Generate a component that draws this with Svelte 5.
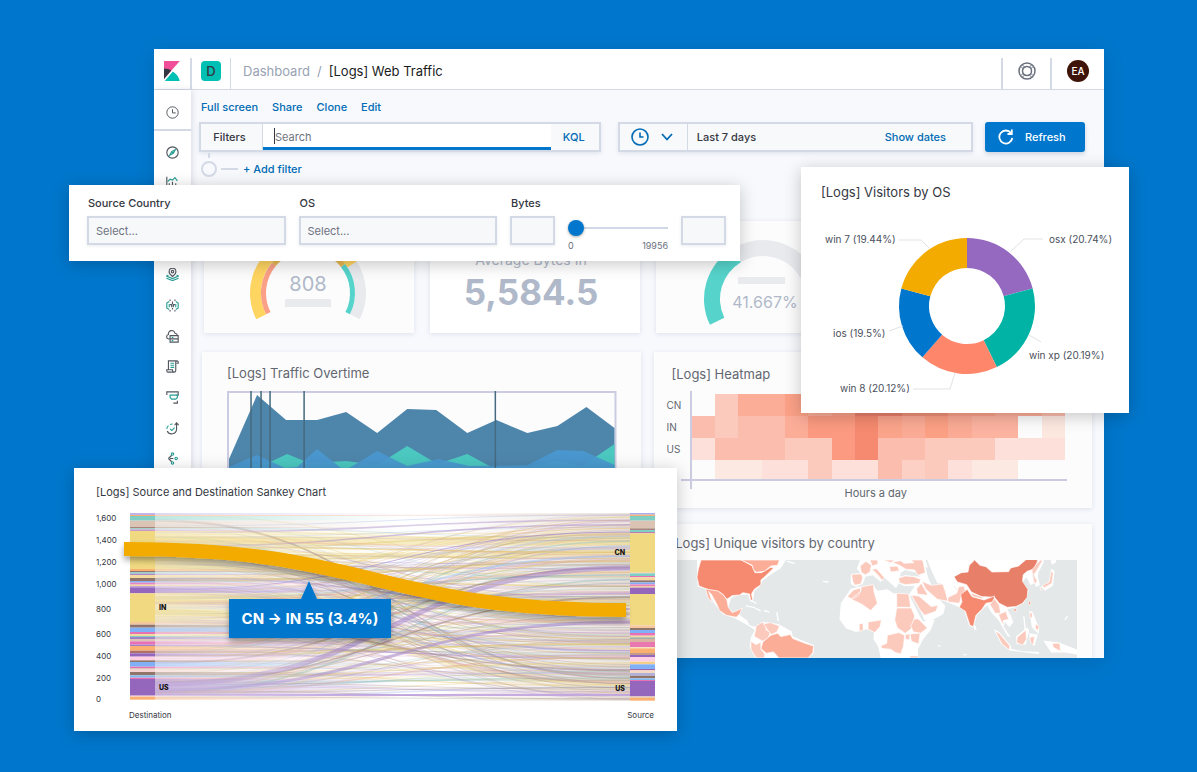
<script lang="ts">
  type Band = [number, string];

  const gray = '#525760';
  const teal = '#2a9d94';

  // 16x16 line icons, each a list of [path, stroke]
  const navItems: { name: string; paths: [string, string][] }[] = [
    { name: 'Discover', paths: [['M8 1a7 7 0 1 0 0 14a7 7 0 0 0 0-14z', gray], ['M11.5 4.5L9 9L4.5 11.5L7 7zM7 7l2 2', teal]] },
    { name: 'Visualize', paths: [['M1 1v14h14M4 12V9M8 12V7M12 12V9', gray], ['M2 7l3-3l3 1l3-3l3 4', teal]] },
    { name: 'Dashboard', paths: [['M1 2h14v12H1z', gray], ['M1 6h14', teal]] },
    { name: 'Canvas', paths: [['M2 2h9v9H2z', gray], ['M6 6h8v8H6z', teal]] },
    { name: 'Maps', paths: [['M8 10.500C5 8 3.800 6.500 3.800 4.500a4.200 4.200 0 0 1 8.400 0C12.200 6.500 11 8 8 10.500zM8 3a1.500 1.500 0 1 0 0 3a1.500 1.500 0 0 0 0-3z', gray], ['M3 8.500L.5 10l7.500 3l7.500-3L13 8.500M.5 12.500l7.500 3l7.500-3', teal]] },
    { name: 'Machine Learning', paths: [['M5 .500v2M8 3v3M11 .500v2M5 13.500v2M8 11v2M11 13.500v2M5 7h2v3M11 7H9v3', gray], ['M4 3L1 5v6l3 2M12 3l3 2v6l-3 2M4 6v4M12 6v4', teal]] },
    { name: 'Infrastructure', paths: [['M4 11H3a2.800 2.800 0 0 1 0-5.500a4 4 0 0 1 8-1.500a3 3 0 0 1 3 2.500M5 7h10v8H5zM5 11h10', gray], ['M7 9h2M7 13h2', teal]] },
    { name: 'Logs', paths: [['M13 4h2V2.500a1.500 1.500 0 0 0-3 0V13a2 2 0 0 1-4 0v-1H1v1.500A1.500 1.500 0 0 0 2.500 15H10M3 12V1h10', gray], ['M5.500 4h4.500M5.500 6.500h4.500M5.500 9h4.500', teal]] },
    { name: 'APM', paths: [['M1 5V1h14v4h-2M9 15h5v-3', gray], ['M5 5h9v3l-2 2H7L5 8z', teal]] },
    { name: 'Uptime', paths: [['M1.500 11a6 6 0 0 0 11.500-2V2M10.500 4L13 1l2.500 3', gray], ['M5 8.500l2.200 2L10.500 7M1 8.500a6 6 0 0 1 2-4M5 3.200a6 6 0 0 1 3-.7', teal]] },
    { name: 'Graph', paths: [['M5 8h4M3 8l4-4M3 8l4 4', gray], ['M8 1a1.500 1.500 0 1 0 0 3a1.500 1.500 0 0 0 0-3zM8 12a1.500 1.500 0 1 0 0 3a1.500 1.500 0 0 0 0-3zM12.500 6.500a1.500 1.500 0 1 0 0 3a1.500 1.500 0 0 0 0-3z', teal]] }
  ];

  const menu = ['Full screen', 'Share', 'Clone', 'Edit'];

  function polar(cx: number, cy: number, r: number, deg: number) {
    const a = ((deg - 90) * Math.PI) / 180;
    return `${(cx + r * Math.cos(a)).toFixed(2)} ${(cy + r * Math.sin(a)).toFixed(2)}`;
  }

  // ring segment, angles clockwise from twelve o'clock
  function ring(cx: number, cy: number, r1: number, r0: number, a: number, b: number) {
    const big = b - a > 180 ? 1 : 0;
    return `M${polar(cx, cy, r1, a)}A${r1} ${r1} 0 ${big} 1 ${polar(cx, cy, r1, b)}L${polar(cx, cy, r0, b)}A${r0} ${r0} 0 ${big} 0 ${polar(cx, cy, r0, a)}Z`;
  }

  const donut = [
    { from: 0, to: 75, color: '#9569c0' },
    { from: 75, to: 154, color: '#00b3a4' },
    { from: 154, to: 221, color: '#fe876b' },
    { from: 221, to: 285, color: '#0077cc' },
    { from: 285, to: 360, color: '#f3ab00' }
  ];

  const donutLabels = [
    { text: 'win 7 (19.44%)', x: 24, y: 36, line: '98,33 120,33 128,41' },
    { text: 'osx (20.74%)', x: 248, y: 36, line: '242,32 223,32 209,45' },
    { text: 'ios (19.5%)', x: 32, y: 130, line: '88,124 102,119' },
    { text: 'win xp (20.19%)', x: 228, y: 152, line: '228,128 240,135' },
    { text: 'win 8 (20.12%)', x: 39, y: 185, line: '112,182 149,182 154,166' }
  ];

  const heat = [
    ['', '#fccabd', '#fcad98', '#fcad98', '#fba188', '#fcad98', '#fba188', '#e87f68', '#e87f68', '#f09078', '#f09078', '#fba188', '#fba188', '#fcad98', '#fcad98', '#fcbdad'],
    ['#fbbdad', '#fccabd', '#fbbdad', '#fbbdad', '#fcad98', '#fb9a80', '#fb9a80', '#f58a70', '#fba48c', '#fbab95', '#fca084', '#fbab95', '#fcb3a0', '#fcb3a0', '', '#fde8e0'],
    ['#fde0da', '#fbbdad', '#fbbdad', '#fbbdad', '#fccabd', '#fccabd', '#fb9a80', '#f58a70', '#fbbdad', '#fbbdad', '#fccabd', '#fccabd', '#fccabd', '#fde0da', '#fde0da', '#fde0da'],
    ['', '#fceae2', '#fceae2', '#fde0da', '#fde0da', '#fccabd', '#fde0da', '#fde0da', '#fbbdad', '#fdd0c5', '#fccabd', '#fde0da', '#fceae2', '#fceae2', '', '']
  ];

  const land = [
    'M78 120H345L330 145L305 160L275 182L268 198L250 214L246 246L236 240L232 224L205 226L180 236L172 262L186 278L214 264L206 284L214 292L228 300L236 316L258 322L275 306L322 312L362 334L366 350L430 376L428 400L412 414H254L236 382L240 352L252 330L226 314L190 294L158 284L136 258L118 232L102 206L80 200Z',
    'M568 120H765L772 145L782 160L790 195L800 200L812 190L830 190L842 228L870 226L850 196L846 180L862 165L905 150L912 120H1120L1108 150L1085 165L1090 190L1080 196L1068 172L1055 186L1074 214L1060 250L1036 262L1010 268L1022 290L1028 308L1016 322L1004 306L998 318L1020 352L1010 348L985 302L962 278L950 256L934 270L918 288L912 310L906 322L896 318L880 270L866 262L828 246L806 238L824 258L818 282L775 306L758 298L722 232L716 222L732 198L700 198L684 190L676 205L660 190L640 172L630 186L606 166L584 170L576 192L556 200L540 192L540 162L570 160L558 146Z',
    'M770 120H915L905 160L862 165L850 200L872 226L842 230L825 192L800 190L786 160L778 142Z',
    'M510 250L540 206L566 200L606 194L620 212L650 208L668 220L716 222L738 262L756 304L792 300L780 330L756 360L742 388V414H630L622 380L608 358L610 336L586 328L556 336L526 326L506 298Z',
    'M908 312l8 8l2 12l-8-4zM970 328l16 8l36 44l-2 14l-28-22zM1036 350l34-28l6 10l-10 42l-28-2zM1016 386l40 8l50 2l-2 6l-88-10zM1076 340l26 4l-10 34l-14-16zM1118 362l48 6l56 22v14l-40-6l-40 0zM1076 272l10 4l20 50l-2 16l-20-20zM1084 150l16-24l14-8l6 8l-16 28l-2 16l6 24l-12 8zM1112 200l24-14l6-40l10 6l-4 44l-24 16zM1140 122l14-4l4 8l-14 8zM570 120l14 4l-4 10l-12-4z'
  ];

  const countries: [string, string][] = [
    ['#f58a70', 'M90 120H212L244 138L252 158L272 158L300 142L308 144L284 168L270 180L270 194L250 208L242 222L245 242L239 240L236 222L216 218L206 225L184 227L168 238L155 222L142 214L116 210L102 205L84 198L78 172L82 148Z'],
    ['#fcad98', 'M210 120H326L320 136L300 138L280 154L256 157L248 150L244 136Z'],
    ['#fcad98', 'M104 207L140 213L156 224L168 240L172 262L184 278L200 272L214 264L206 282L196 292L166 286L146 272L136 250L122 224L113 214L124 248L112 234Z'],
    ['#fccabd', 'M256 318L274 307L284 314L286 330L298 338L292 354L276 364L250 350Z'],
    ['#fccabd', 'M278 312L298 308L326 318L318 336L302 344L290 330Z'],
    ['#fcad98', 'M276 366L300 346L320 340L330 350L358 344L366 356L402 370L428 378L426 398L412 414H324L308 396L286 400L270 386Z'],
    ['#fccabd', 'M240 364L256 374L270 366L270 388L282 402L280 414H256L240 388Z'],
    ['#fccabd', 'M542 163L572 162L576 174L570 192L552 196L546 184Z'],
    ['#fccabd', 'M568 138L586 124L602 136L598 156L584 164L572 158Z'],
    ['#fccabd', 'M598 120H620L622 132L604 138Z'],
    ['#fccabd', 'M638 120H672L660 128ZM656 140L680 138L686 152L660 156ZM664 126L690 122L700 130L730 128L720 120H756L764 158L742 166L732 150L706 148L690 138Z'],
    ['#fccabd', 'M603 148L618 146L640 172L636 182L616 160Z'],
    ['#fccabd', 'M684 174L704 168L730 170L750 178L746 190L704 194L686 188Z'],
    ['#fccabd', 'M530 230L548 210L568 204L570 210L564 226L544 238ZM540 237L570 214L572 200L608 194L610 216L620 250L600 272L572 252Z'],
    ['#fccabd', 'M678 220L714 222L720 262H678Z'],
    ['#fccabd', 'M678 264H722L732 288L722 326L704 340L680 324L672 300Z'],
    ['#fccabd', 'M720 318L732 296L744 298L770 324L750 340L728 336Z'],
    ['#fccabd', 'M718 342L748 340L744 372L722 364ZM704 344L718 342L716 360L704 358Z'],
    ['#fccabd', 'M592 306L632 300L628 320L612 338L592 328ZM565 312L577 310V332L566 334Z'],
    ['#fccabd', 'M650 346L684 338L702 346L698 380L690 402L674 398L660 388L634 386L630 378L648 370ZM718 408H742V414H718Z'],
    ['#fccabd', 'M722 226L744 228L782 260L802 256L796 274L762 286L748 270Z'],
    ['#fccabd', 'M738 206L752 190L772 226L740 222Z'],
    ['#fccabd', 'M754 184L782 196L816 192L824 214L832 244L800 238L782 222L764 206Z'],
    ['#fccabd', 'M832 232L858 220L864 200L880 198L884 214L872 232L866 250L832 246Z'],
    ['#e87f68', 'M850 170L872 158L892 156L896 136L912 120L928 136L946 140L964 156L1014 155L1020 144L1044 138L1072 114L1102 120L1092 146L1070 154L1058 164L1056 184L1072 208L1070 232L1056 250L1036 260L1010 262L986 250L972 232L932 230L902 216L888 194L860 186Z'],
    ['#f58a70', 'M870 224L890 208L904 230L940 240L972 228L968 246L946 250L934 268L916 286L908 320L898 316L884 274L866 262L874 246Z'],
    ['#fccabd', 'M900 218L932 230L940 238L906 230ZM958 254L972 236L986 256L990 280L974 280ZM984 284L1006 274L1014 298L998 302L1000 318L990 300Z'],
    ['#fccabd', 'M974 334L986 340L1018 378L1016 390L994 372ZM1040 352L1066 330L1068 358L1056 376L1038 368ZM1078 352L1092 350L1088 376L1080 366ZM1146 370L1168 370L1170 394L1148 382Z'],
    ['#fccabd', 'M1078 276L1086 282L1084 296L1078 290ZM1096 312L1106 320L1102 332L1094 324ZM1084 150L1100 130L1110 120L1116 122L1098 152L1090 164L1100 184L1092 192ZM1116 196L1136 186L1142 152L1148 160L1144 190L1120 204ZM1108 200L1116 206L1112 212Z'],
    ['#f58a70', 'M1075 244L1080 244L1079 256L1074 252ZM1030 268L1038 266L1036 274L1030 274Z']
  ];

  const left: Band[] = [
    [6, '#c0b5ea'], [3, '#fbb071'], [14, '#80cfc4'], [19, '#dcc4b4'], [4, '#a8857c'], [3, '#80cfc4'], [5, '#c99ac8'],
    [114, '#f0d981'], [6, '#f9b072'], [4, '#92756a'], [4, '#80cfc4'], [4, '#b08ac8'], [9, '#f3d9a0'], [9, '#92756a'], [5, '#85acf0'], [6, '#e686c0'], [4, '#f3d9a0'], [4, '#c0a0d8'], [18, '#9467bd'],
    [86, '#f0d981'], [8, '#f5c79f'], [9, '#92756a'], [13, '#80b1f7'], [6, '#e671b4'], [6, '#f3d9a0'], [3, '#80cfc4'], [6, '#a080c8'], [7, '#dcc4b4'], [10, '#e671b4'], [4, '#a080c8'], [14, '#fbb071'], [8, '#b0706a'], [10, '#9467bd'], [11, '#ffcfe3'], [5, '#92756a'], [14, '#80b1f7'], [4, '#e671b4'], [5, '#dcc4b4'], [7, '#f6d2d2'], [10, '#92756a'], [7, '#85bcf0'], [4, '#e671b4'], [50, '#9467bd'], [3, '#f6d2d2'], [9, '#fbb071']
  ];

  const right: Band[] = [
    [5, '#a5aef0'], [4, '#fbb071'], [14, '#80cfc4'], [23, '#dcc4b4'], [5, '#a8857c'], [6, '#80cfc4'], [4, '#c07ab0'],
    [117, '#f0d981'], [3, '#f5c79f'], [8, '#80cfc4'], [4, '#e671b4'], [9, '#f3d9a0'], [6, '#92756a'], [6, '#85acf0'], [5, '#e686c0'], [5, '#f3c9a0'], [19, '#9467bd'],
    [94, '#f0d981'], [8, '#f5c79f'], [6, '#92756a'], [9, '#80b1f7'], [8, '#e671b4'], [5, '#f3d9a0'], [5, '#a0b0a8'], [9, '#dcb4a4'], [15, '#ea78b0'], [4, '#f3e0c0'], [14, '#fbb071'], [6, '#c09a8a'], [6, '#9467bd'], [14, '#ffcfe3'], [8, '#f3d08a'], [14, '#80b1f7'], [4, '#a060b0'], [8, '#f3d9c0'], [8, '#b0b0e0'], [8, '#92756a'], [5, '#85bcf0'], [3, '#e671b4'], [46, '#9467bd'], [4, '#dcc4b4'], [9, '#fbb071']
  ];

  function stack(bands: Band[]) {
    let y = 513;
    return bands.map(([h, color]) => {
      const bar = { y, h: h / 3, color };
      y += h / 3;
      return bar;
    });
  }

  const leftBars = stack(left);
  const rightBars = stack(right);

  let seed = 11;
  function rand() {
    seed = (seed * 16807) % 2147483647;
    return seed / 2147483647;
  }

  function flow(y0: number, y1: number) {
    return `M155 ${y0.toFixed(1)}C392 ${y0.toFixed(1)} 392 ${y1.toFixed(1)} 630 ${y1.toFixed(1)}`;
  }

  const tints = ['#dcbf58', '#dcbf58', '#e6c862', '#a888c8', '#a888c8', '#9a7a70', '#e8a890', '#d8a0c8', '#94b4e8', '#80bcb0', '#c8a894'];
  const threads = Array.from({ length: 300 }, () => {
    const y0 = 515 + Math.pow(rand(), 0.8) * 184;
    const y1 = rand() < 0.25 ? y0 + (rand() - 0.5) * 30 : 515 + rand() * 184;
    return {
      d: flow(y0, Math.min(699, Math.max(515, y1))),
      color: tints[Math.floor(rand() * tints.length)],
      width: rand() < 0.1 ? 1.6 : 0.6,
      opacity: 0.3 + rand() * 0.25
    };
  });

  const ribbons = [
    { d: flow(541, 541), color: '#f0dc8c', width: 9, opacity: 0.5 },
    { d: flow(558, 553), color: '#f0dc8c', width: 6, opacity: 0.45 },
    { d: flow(565, 602), color: '#f0dc8c', width: 10, opacity: 0.3 },
    { d: flow(600, 600), color: '#f0dc8c', width: 8, opacity: 0.35 },
    { d: flow(612, 683), color: '#f0dc8c', width: 5, opacity: 0.4 }
  ];

  const highlights = [
    { d: flow(684, 568), color: '#a080cc', width: 5, opacity: 0.5 },
    { d: flow(690, 622), color: '#a080cc', width: 3, opacity: 0.5 },
    { d: flow(695, 695), color: '#b99bdc', width: 2, opacity: 0.8 },
    { d: flow(590, 532), color: '#a080cc', width: 1, opacity: 0.6 },
    { d: flow(630, 556), color: '#9cc0f4', width: 2, opacity: 0.5 }
  ];

  const axis: [string, number][] = [
    ['1,600', 518], ['1,400', 540], ['1,200', 562], ['1,000', 584], ['800', 609], ['600', 634], ['400', 656], ['200', 678], ['0', 699]
  ];

  let bytes = $state(0);
  let query = $state('');
</script>

<div class="stage">
  <div class="window">
    <header>
      <a class="brand" href="#home" aria-label="Home">
        <svg width="16" height="20" viewBox="0 0 26 32" preserveAspectRatio="none">
          <path fill="#f04e98" d="M0 0v28.800L25.600 0z" />
          <path fill="#343741" d="M0 12v16.800L11.900 15.100C8.400 13.100 4.300 12 0 12" />
          <path fill="#00bfb3" d="M14.500 16.800L1.200 32h24.400c-1.300-6.300-5.500-11.600-11.100-15.200" />
        </svg>
      </a>
      <div class="space"><span>D</span></div>
      <nav class="crumbs" aria-label="Breadcrumbs">
        <a href="#dashboards">Dashboard</a><i>/</i><span>[Logs] Web Traffic</span>
      </nav>
      <button class="help" aria-label="Help">
        <svg width="18" height="18" viewBox="0 0 18 18" fill="none" stroke="#69707d">
          <circle cx="9" cy="9" r="8" stroke-width="1.500" />
          <circle cx="9" cy="9" r="4.500" stroke-width="1.500" />
          <path d="M3 4.500L5.500 7M4.500 3L7 5.500M15 4.500L12.500 7M13.500 3L11 5.500M3 13.500L5.500 11M4.500 15L7 12.500M15 13.500L12.500 11M13.500 15L11 12.500" />
        </svg>
      </button>
      <div class="user"><span>EA</span></div>
    </header>

    <div class="body">
      <aside>
        <button class="recent" aria-label="Recently viewed">
          <svg width="13" height="13" viewBox="0 0 16 16" fill="none" stroke="#525760" stroke-width="1.200">
            <circle cx="8" cy="8" r="7" /><path d="M8 4v4.500h4" />
          </svg>
        </button>
        <nav aria-label="Apps">
          {#each navItems as item}
            <a href="#{item.name}" aria-label={item.name}>
              <svg width="13" height="13" viewBox="0 0 16 16" fill="none" stroke-width="1.400">
                {#each item.paths as [d, stroke]}
                  <path {d} {stroke} />
                {/each}
              </svg>
            </a>
          {/each}
        </nav>
      </aside>

      <main>
        <div class="menu">
          {#each menu as entry}
            <button>{entry}</button>
          {/each}
        </div>

        <div class="querybar">
          <div class="search">
            <button class="filters">Filters</button>
            <div class="field">
              <span class="caret"></span>
              <input type="text" placeholder="Search" aria-label="Search" bind:value={query} />
            </div>
            <button class="kql">KQL</button>
          </div>
          <div class="dates">
            <button class="quick" aria-label="Quick time ranges">
              <svg width="18" height="18" viewBox="0 0 18 18" fill="none" stroke="#006bb4" stroke-width="1.600">
                <circle cx="9" cy="9" r="8" /><path d="M9 4.500V9h3.500" />
              </svg>
              <svg width="12" height="8" viewBox="0 0 12 8" fill="none" stroke="#006bb4" stroke-width="1.800">
                <path d="M1 1l5 5.500l5-5.500" />
              </svg>
            </button>
            <span class="range">Last 7 days</span>
            <button class="show">Show dates</button>
          </div>
          <button class="refresh">
            <svg width="16" height="16" viewBox="0 0 16 16" fill="none" stroke="#fff" stroke-width="1.800">
              <path d="M13 4A6.500 6.500 0 1 0 14.300 9M13.800 .5V5H9.500" />
            </svg>
            Refresh
          </button>
        </div>

        <div class="filterrow">
          <i class="dot"></i><i class="dash"></i>
          <button>+ Add filter</button>
        </div>

        <div class="metrics">
          <section class="card">
            <svg width="209" height="112" viewBox="0 0 209 112">
              <path fill="#e8eaee" d={ring(104, 72, 58, 47, 57, 117)} />
              <path fill="#ffd561" d={ring(104, 72, 58, 47, -117, 57)} />
              <path fill="#faa086" d={ring(104, 72, 47, 42, -117, -50)} />
              <path fill="#e8b952" d={ring(104, 72, 47, 42, -50, 52)} />
              <path fill="#56d4cb" d={ring(104, 72, 47, 42, 52, 117)} />
              <text class="gauge-value" x="104" y="70" text-anchor="middle">808</text>
              <rect x="81" y="78" width="46" height="8" fill="#e8eaee" />
            </svg>
          </section>
          <section class="card metric">
            <span>Average Bytes In</span>
            <b>5,584.5</b>
          </section>
          <section class="card">
            <svg width="209" height="112" viewBox="0 0 209 112">
              <path fill="#e8eaee" d={ring(107, 78, 59, 43, -31, 116)} />
              <path fill="#56d4cb" d={ring(107, 78, 59, 43, -116, -31)} />
              <rect x="82" y="56" width="47" height="7" fill="#e8eaee" />
              <text class="percent" x="109" y="87" text-anchor="middle">41.667%</text>
            </svg>
          </section>
          <section class="card"></section>
        </div>

        <div class="panels">
          <section class="card traffic">
            <h2>[Logs] Traffic Overtime</h2>
            <svg viewBox="0 0 390 190">
              <path fill="none" stroke="#cbcce2" stroke-width="2" d="M1 190V1H388V190" />
              <path fill="#4e86ab" d="M2 68L30 4L59 29H90L119 21L150 42L180 18L209 19L240 42L269 29L300 42L330 35L359 16L387 37V190H2Z" />
              <path fill="#4bc8c0" d="M2 77L43 71L60 63L82 72L119 70L150 74L180 55L210 73L240 63L264 76L300 76L328 70L355 75L387 53V190H2Z" />
              <path fill="#4a98d0" fill-opacity=".92" d="M2 76L30 64L58 77L70 76L90 58L114 77H122L150 60L180 75L211 68L242 75L300 74L330 59L356 60L387 74V190H2Z" />
              <path stroke="#466a80" stroke-width="1.500" d="M24 0V190M34 0V190M43 0V190M77 0V190M268 0V190" />
            </svg>
          </section>

          <div class="column">
            <section class="card heatmap">
              <h2>[Logs] Heatmap</h2>
              <div class="heat">
                <div class="rows"><span>CN</span><span>IN</span><span>US</span></div>
                <div class="plot">
                  {#each heat as row}
                    {#each row as color}
                      <i style="background: {color || 'transparent'}"></i>
                    {/each}
                  {/each}
                </div>
              </div>
              <p>Hours a day</p>
            </section>

            <section class="card map">
              <h2>[Logs] Unique visitors by country</h2>
              <svg viewBox="0 120 1221 294">
                <rect y="120" width="1221" height="294" fill="#e4e8e9" />
                {#each land as d}
                  <path {d} fill="#fff" />
                {/each}
                <path fill="#e4e8e9" d="M690 158l14-8l16 4l20 4l8 12l-18-2l-26-2l-16 4zM764 142l14 2l6 16l2 18l8 14l-10 6l-10-20zM716 226l8 4l30 52l6 18l-8-2zM182 232l20-6l14 6l-10 6z" />
                {#each countries as [fill, d]}
                  <path {d} {fill} stroke="#fff" stroke-width="2" />
                {/each}
                <path fill="none" stroke="#fff" stroke-width="4" stroke-linecap="round" d="M226 258l22 4l20 10M280 272l14 4M458 184l14 2M240 242l16 8M1184 298l6-8M318 278l4 24M350 124l20 6M804 378h4M1060 290l4 40M880 404h6" />
              </svg>
            </section>
          </div>
        </div>
      </main>
    </div>
  </div>

  <section class="float controls">
    <div class="control">
      <label for="country">Source Country</label>
      <select id="country"><option>Select...</option></select>
    </div>
    <div class="control">
      <label for="os">OS</label>
      <select id="os"><option>Select...</option></select>
    </div>
    <div class="control">
      <label for="min">Bytes</label>
      <input id="min" type="text" />
    </div>
    <div class="slider">
      <input type="range" min="0" max="19956" bind:value={bytes} aria-label="Bytes range" />
      <div><span>0</span><span>19956</span></div>
    </div>
    <input class="max" type="text" aria-label="Maximum bytes" />
  </section>

  <section class="float visitors">
    <h2>[Logs] Visitors by OS</h2>
    <svg viewBox="0 0 328 206">
      {#each donut as part}
        <path d={ring(166, 99, 68, 38, part.from, part.to)} fill={part.color} />
      {/each}
      {#each donutLabels as label}
        <polyline points={label.line} fill="none" stroke="#e2e3e6" />
        <text x={label.x} y={label.y}>{label.text}</text>
      {/each}
    </svg>
  </section>

  <section class="float sankey">
    <h2>[Logs] Source and Destination Sankey Chart</h2>
    <svg viewBox="96 504 560 218">
      <defs>
        <linearGradient id="fade-out">
          <stop offset="0" stop-color="#fff" stop-opacity=".5" />
          <stop offset=".5" stop-color="#fff" stop-opacity=".75" />
          <stop offset="1" stop-color="#fff" />
        </linearGradient>
        <linearGradient id="fade-in">
          <stop offset="0" stop-color="#e6dcd6" stop-opacity="0" />
          <stop offset="1" stop-color="#e6dcd6" stop-opacity=".8" />
        </linearGradient>
        <linearGradient id="thin-out">
          <stop offset="0" stop-color="#fff" stop-opacity=".2" />
          <stop offset=".4" stop-color="#fff" />
        </linearGradient>
        <mask id="threads" maskUnits="userSpaceOnUse" x="155" y="504" width="475" height="218">
          <rect x="155" y="504" width="475" height="218" fill="url(#thin-out)" />
        </mask>
        <filter id="lift" x="-10%" y="-50%" width="120%" height="220%">
          <feDropShadow dx="0" dy="4" stdDeviation="3" flood-opacity=".35" />
        </filter>
      </defs>

      {#each leftBars as bar}
        <rect x="155" y={bar.y} width="245" height={bar.h} fill={bar.color} />
      {/each}
      <rect x="155" y="512" width="246" height="190" fill="url(#fade-out)" />
      <rect x="440" y="513" width="190" height="188" fill="url(#fade-in)" />
      {#each ribbons as r}
        <path d={r.d} fill="none" stroke={r.color} stroke-width={r.width} stroke-opacity={r.opacity} />
      {/each}
      <g mask="url(#threads)">
        {#each threads as t}
          <path d={t.d} fill="none" stroke={t.color} stroke-width={t.width} stroke-opacity={t.opacity} />
        {/each}
        {#each highlights as r}
          <path d={r.d} fill="none" stroke={r.color} stroke-width={r.width} stroke-opacity={r.opacity} />
        {/each}
      </g>

      {#each leftBars as bar}
        <rect x="130" y={bar.y} width="25" height={bar.h} fill={bar.color} />
      {/each}
      {#each rightBars as bar}
        <rect x="630" y={bar.y} width="25" height={bar.h} fill={bar.color} />
      {/each}

      <path d="M124 549C375 549 375 610 626 610" fill="none" stroke="#f3ab00" stroke-width="14" filter="url(#lift)" />

      {#each axis as [text, y]}
        <text class="tick" x="96" y={y + 3}>{text}</text>
      {/each}
      <text class="end" x="129" y="718">Destination</text>
      <text class="end" x="654" y="718" text-anchor="end">Source</text>
      <text class="node" x="159" y="610">IN</text>
      <text class="node" x="159" y="690">US</text>
      <text class="node" x="625" y="555" text-anchor="end">CN</text>
      <text class="node" x="625" y="691" text-anchor="end">US</text>

      <path d="M229 599H301L309 581L317 599H391V638H229Z" fill="#0077cc" filter="url(#lift)" />
      <text class="tip" x="310" y="624" text-anchor="middle">CN → IN 55 (3.4%)</text>
    </svg>
  </section>
</div>

<style>
  :global(body) {
    margin: 0;
    background: #0077cc;
  }

  .stage {
    position: relative;
    box-sizing: border-box;
    min-height: 100vh;
    padding: 49px 93px 114px 154px;
    background: #0077cc;
    font-family: Inter, sans-serif;
    font-size: 12px;
    line-height: 16px;
    color: #343741;
  }

  svg {
    display: block;
  }

  button {
    padding: 0;
    border: 0;
    background: none;
    font: inherit;
    color: #006bb4;
    cursor: pointer;
  }

  input,
  select {
    box-sizing: border-box;
    margin: 0;
    min-width: 0;
    font: inherit;
    border-radius: 0;
    outline: none;
  }

  h2 {
    margin: 0;
    font-size: 13px;
    font-weight: 400;
    line-height: 16px;
    color: #62676f;
  }

  .window {
    background: #f7f9fd;
    box-shadow: 0 4px 20px rgba(0, 0, 0, 0.12);
    overflow: hidden;
  }

  header {
    display: flex;
    align-items: flex-end;
    height: 41px;
    box-sizing: border-box;
    background: #fff;
    border-bottom: 1px solid #d3dae6;
  }

  header > * {
    display: flex;
    align-items: center;
    justify-content: center;
    box-sizing: border-box;
    height: 31px;
    padding-bottom: 5px;
  }

  .brand {
    width: 36px;
  }

  .space {
    width: 41px;
    border: solid #d3dae6;
    border-width: 0 1px 0 2px;
  }

  .space span {
    width: 20px;
    border-radius: 4px;
    background: #00bfb3;
    font-size: 13px;
    font-weight: 500;
    line-height: 20px;
    text-align: center;
  }

  .crumbs {
    flex: 1;
    justify-content: flex-start;
    gap: 7px;
    padding-left: 12px;
    font-size: 13px;
  }

  .crumbs a,
  .crumbs i {
    color: #98a2b3;
    font-style: normal;
    text-decoration: none;
  }

  .crumbs span {
    color: #1a1c21;
  }

  .help {
    width: 49px;
    padding-bottom: 5px;
    border-left: 2px solid #d3dae6;
  }

  .user {
    width: 54px;
    border-left: 2px solid #d3dae6;
  }

  .user span {
    width: 22px;
    border-radius: 50%;
    background: #3f1408;
    color: #fff;
    font-size: 10px;
    font-weight: 500;
    line-height: 22px;
    text-align: center;
  }

  .body {
    display: flex;
  }

  aside {
    width: 37px;
    background: #fff;
    box-shadow: 1px 0 6px rgba(60, 70, 100, 0.16);
  }

  aside .recent {
    display: flex;
    justify-content: center;
    align-items: center;
    box-sizing: border-box;
    width: 100%;
    height: 41px;
    padding-top: 6px;
    border-bottom: 2px solid #d3dae6;
  }

  aside nav {
    display: flex;
    flex-direction: column;
    justify-content: space-between;
    height: 323px;
    padding-top: 13px;
  }

  aside nav a {
    display: flex;
    align-items: center;
    justify-content: center;
    height: 16px;
  }

  main {
    flex: 1;
    min-width: 0;
    padding: 9px 12px 0 8px;
  }

  .menu {
    display: flex;
    gap: 14px;
    padding-left: 2px;
  }

  .menu button,
  .filterrow button,
  .kql,
  .show {
    font-size: 11px;
    font-weight: 500;
  }

  .querybar {
    display: flex;
    margin: 7px 7px 9px 0;
  }

  .search,
  .dates {
    display: flex;
    box-sizing: border-box;
    height: 30px;
    border: 2px solid #d3dae6;
    background: #f7f9fb;
    box-shadow: 0 2px 4px rgba(150, 160, 180, 0.2);
  }

  .search {
    flex: 402;
    margin-right: 17px;
  }

  .filters {
    width: 62px;
    padding-right: 4px;
    border-right: 1px solid #d3dae6;
    font-size: 11px;
    font-weight: 500;
    color: #343741;
  }

  .field {
    display: flex;
    flex: 1;
    align-items: center;
    padding-left: 11px;
    border-bottom: 3px solid #0077cc;
    background: #fff;
  }

  .caret {
    width: 1px;
    height: 16px;
    background: #343741;
  }

  .field input {
    flex: 1;
    padding: 2px 0 0;
    border: 0;
    background: none;
    font-size: 11px;
  }

  .field input::placeholder {
    color: #6d727e;
  }

  .kql {
    width: 48px;
    padding-right: 2px;
  }

  .dates {
    flex: 355;
    align-items: center;
    margin-right: 12px;
  }

  .quick {
    display: flex;
    align-items: center;
    gap: 12px;
    box-sizing: border-box;
    width: 68px;
    height: 100%;
    padding-left: 11px;
    border-right: 1px solid #d3dae6;
  }

  .range {
    flex: 1;
    padding-left: 9px;
    font-size: 11px;
    font-weight: 500;
  }

  .show {
    padding-right: 25px;
  }

  .refresh {
    display: flex;
    flex: 0 0 100px;
    align-items: center;
    gap: 11px;
    padding-left: 13px;
    border-radius: 3px;
    background: #0077cc;
    box-shadow: 0 2px 4px rgba(100, 120, 150, 0.3);
    color: #fff;
    font-size: 11px;
    font-weight: 500;
  }

  .filterrow {
    display: flex;
    align-items: center;
    height: 16px;
    padding-left: 2px;
  }

  .dot {
    position: relative;
    width: 12px;
    height: 12px;
    border: 2px solid #d3dae6;
    border-radius: 50%;
  }

  .dot::before {
    content: '';
    position: absolute;
    left: 5px;
    bottom: 17px;
    width: 2px;
    height: 5px;
    background: #d3dae6;
  }

  .dash {
    width: 17px;
    height: 2px;
    margin: 0 5px 0 4px;
    background: #d3dae6;
  }

  .card {
    background: #fcfcfd;
    box-shadow: 0 1px 5px rgba(120, 130, 160, 0.2);
  }

  .metrics {
    display: grid;
    grid-template-columns: repeat(4, 1fr);
    gap: 16px;
    height: 112px;
    margin: 44px 0 19px 5px;
  }

  .gauge-value {
    font-size: 20px;
    fill: #b0b9c9;
  }

  .percent {
    font-size: 16px;
    fill: #b0b9c9;
  }

  .metric {
    display: flex;
    flex-direction: column;
    align-items: center;
    padding: 31px 8px 0 0;
    box-sizing: border-box;
    background: #fff;
    color: #b0b9c9;
  }

  .metric span {
    font-size: 14px;
  }

  .metric b {
    font-size: 35px;
    line-height: 48px;
  }

  .panels {
    display: grid;
    grid-template-columns: 1fr 1fr;
    gap: 13px;
    margin-left: 3px;
  }

  .traffic {
    padding: 13px 23px 0 25px;
  }

  .traffic svg {
    width: 100%;
    margin-top: 10px;
  }

  .column {
    display: flex;
    flex-direction: column;
    gap: 16px;
  }

  .heatmap {
    padding: 14px 25px 7px 13px;
  }

  .heatmap h2 {
    padding-left: 5px;
  }

  .heat {
    display: flex;
    margin-top: 9px;
    font-size: 10px;
    color: #62676f;
  }

  .rows {
    display: flex;
    flex-direction: column;
    gap: 6px;
    width: 23px;
    padding-top: 6px;
  }

  .plot {
    position: relative;
    display: grid;
    flex: 1;
    grid-template-columns: repeat(16, 1fr);
    grid-template-rows: 22px 22px 22px 20px;
    padding: 3px 2px 9px 0;
    border-left: 2px solid #cbcce2;
  }

  .plot::after {
    content: '';
    position: absolute;
    left: -11px;
    right: 0;
    bottom: 8px;
    height: 2px;
    background: #cbcce2;
  }

  .heatmap p {
    margin: -4px 0 0 18px;
    font-size: 11px;
    line-height: 16px;
    text-align: center;
    color: #62676f;
  }

  .map {
    padding: 11px 15px 0 17px;
  }

  .map svg {
    width: 100%;
    margin-top: 9px;
  }

  .float {
    position: absolute;
    background: #fff;
    box-shadow: 0 3px 16px rgba(0, 0, 0, 0.22);
  }

  .float h2 {
    color: #343741;
  }

  .controls {
    top: 185px;
    left: 69px;
    right: 457px;
    display: grid;
    grid-template-columns: 1fr 1fr 45px 100px 45px;
    gap: 13px;
    align-items: end;
    box-sizing: border-box;
    height: 76px;
    padding: 10px 14px 16px 18px;
  }

  .control {
    display: flex;
    flex-direction: column;
    gap: 5px;
  }

  .control label {
    padding-left: 1px;
    font-size: 11px;
    font-weight: 500;
  }

  .control select,
  .control input,
  .max {
    width: 100%;
    height: 29px;
    padding: 0 7px;
    border: 2px solid #d3dae6;
    background: #f6f8fa;
    box-shadow: 0 1px 3px rgba(120, 130, 160, 0.15);
    color: #6d727e;
    font-size: 11px;
    appearance: none;
  }

  .slider {
    display: flex;
    flex-direction: column;
    justify-content: flex-end;
    height: 29px;
    font-size: 9px;
    line-height: 12px;
    color: #69707d;
  }

  .slider div {
    display: flex;
    justify-content: space-between;
    margin-bottom: -7px;
  }

  .slider input {
    width: 100%;
    height: 16px;
    margin-bottom: 4px;
    appearance: none;
    background: linear-gradient(#d3d8e6, #d3d8e6) center / 100% 2px no-repeat;
  }

  .slider input::-webkit-slider-thumb {
    appearance: none;
    width: 16px;
    height: 16px;
    border-radius: 50%;
    background: #0077cc;
    box-shadow: 0 1px 3px rgba(0, 0, 0, 0.35);
  }

  .visitors {
    top: 167px;
    right: 68px;
    width: 328px;
    height: 246px;
  }

  .visitors h2 {
    padding: 17px 20px 7px;
  }

  .visitors text {
    font-size: 10px;
    fill: #4a505c;
  }

  .sankey {
    top: 468px;
    left: 74px;
    right: 520px;
    padding: 16px 21px 9px 22px;
  }

  .sankey h2 {
    margin-bottom: 4px;
    font-size: 11px;
  }

  .tick {
    font-size: 8px;
    fill: #343741;
  }

  .end {
    font-size: 8px;
    fill: #343741;
  }

  .node {
    font-size: 7px;
    font-weight: 800;
    fill: #111;
  }

  .tip {
    font-size: 15px;
    font-weight: 700;
    fill: #fff;
  }
</style>
